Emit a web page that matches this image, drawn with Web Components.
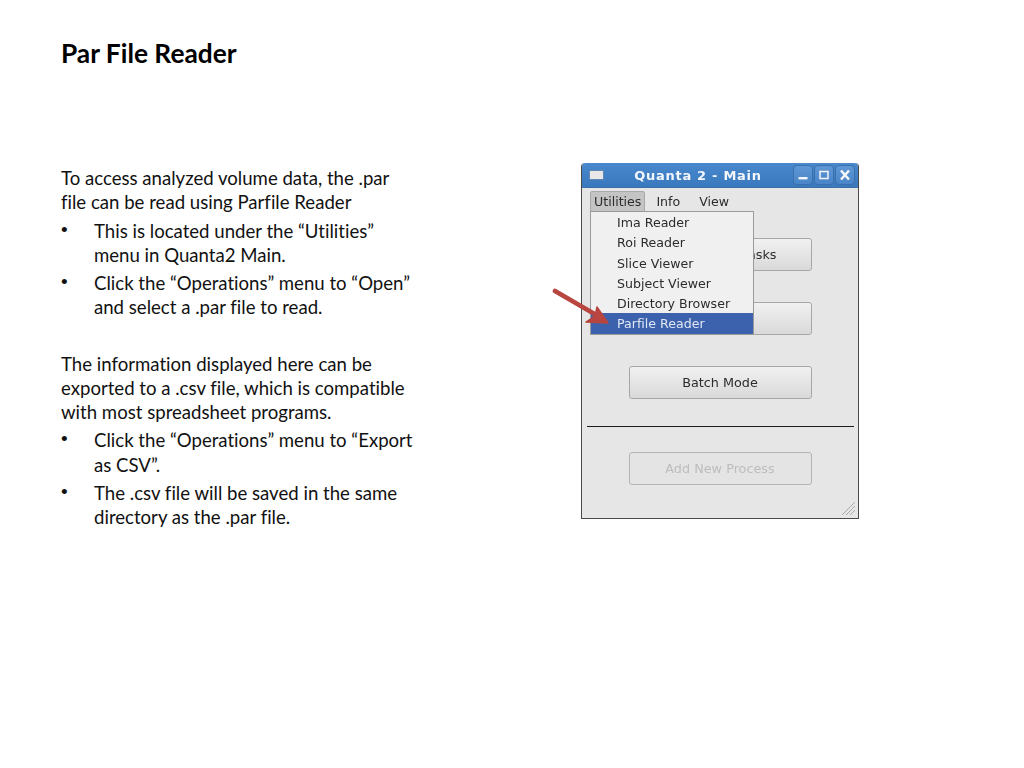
<!DOCTYPE html>
<html>
<head>
<meta charset="utf-8">
<title>Par File Reader</title>
<style>
  html, body { margin: 0; background: #fff; }
</style>
</head>
<body>
<slide-page>
  <span slot="title">Par File Reader</span>
  <slide-para>To access analyzed volume data, the .par file can be read using Parfile Reader</slide-para>
  <slide-bullet>This is located under the “Utilities” menu in Quanta2 Main.</slide-bullet>
  <slide-bullet>Click the “Operations” menu to “Open” and select a .par file to read.</slide-bullet>
  <slide-para class="next">The information displayed here can be exported to a .csv file, which is compatible with most spreadsheet programs.</slide-para>
  <slide-bullet>Click the “Operations” menu to “Export as CSV”.</slide-bullet>
  <slide-bullet>The .csv file will be saved in the same directory as the .par file.</slide-bullet>
  <quanta-window slot="figure">
    <quanta-menu slot="menu"></quanta-menu>
    <quanta-button class="end">Tasks</quanta-button>
    <quanta-button></quanta-button>
    <quanta-button>Batch Mode</quanta-button>
    <hr slot="rule">
    <quanta-button disabled slot="after">Add New Process</quanta-button>
  </quanta-window>
</slide-page>

<script>
class SlidePage extends HTMLElement {
  connectedCallback() {
    this.attachShadow({ mode: 'open' });
    this.shadowRoot.innerHTML = `
      <style>
        :host {
          display: block;
          width: 1024px;
          height: 768px;
          box-sizing: border-box;
          padding: 37px 0 0 61px;
          font-family: Lato, "Liberation Sans", sans-serif;
          font-variant-ligatures: none;
          color: #111;
          overflow: hidden;
        }
        h1 {
          margin: 0;
          font-size: 26.3px;
          line-height: 32px;
          font-weight: 700;
          color: #000;
        }
        .body {
          display: flex;
          margin-top: 94px;
        }
        .text {
          width: 355px;
          padding-top: 3px;
        }
        .figure {
          margin-left: 165px;
        }
      </style>
      <h1><slot name="title"></slot></h1>
      <div class="body">
        <div class="text"><slot></slot></div>
        <div class="figure"><slot name="figure"></slot></div>
      </div>
    `;
  }
}

class SlidePara extends HTMLElement {
  connectedCallback() {
    this.attachShadow({ mode: 'open' });
    this.shadowRoot.innerHTML = `
      <style>
        :host {
          display: block;
          font-size: 18.6px;
          line-height: 24.2px;
        }
        :host(.next) { margin-top: 32px; }
      </style>
      <slot></slot>
    `;
  }
}

class SlideBullet extends HTMLElement {
  connectedCallback() {
    this.attachShadow({ mode: 'open' });
    this.shadowRoot.innerHTML = `
      <style>
        :host {
          display: flex;
          font-size: 18.6px;
          line-height: 24.2px;
          margin-top: 4.2px;
        }
        .dot {
          flex: none;
          width: 33px;
          font-family: "Liberation Sans", sans-serif;
          font-size: 19px;
          line-height: 22px;
        }
      </style>
      <span class="dot">•</span>
      <span><slot></slot></span>
    `;
  }
}

class QuantaWindow extends HTMLElement {
  connectedCallback() {
    this.attachShadow({ mode: 'open' });
    this.shadowRoot.innerHTML = `
      <style>
        :host {
          display: block;
          position: relative;
          width: 278px;
          height: 356px;
          box-sizing: border-box;
          border: 1px solid #4a4a4a;
          border-top: 0;
          border-radius: 4px 4px 0 0;
          background: #e6e6e6;
          font-family: "DejaVu Sans", sans-serif;
          filter: blur(0.35px);
        }
        .title {
          display: flex;
          align-items: center;
          height: 25px;
          padding: 0 3px 0 7px;
          background: linear-gradient(#4a88cc, #3f7fc4 60%, #3a78bd);
          border-radius: 4px 4px 0 0;
          border-bottom: 1px solid #3c6ea8;
          box-sizing: border-box;
        }
        .app {
          width: 15px;
          height: 10px;
          background: #e8e8e8;
          border: 1px solid #5f86b4;
          box-sizing: border-box;
        }
        .name {
          flex: 1;
          text-align: center;
          color: #f2f6fb;
          font-size: 13px;
          font-weight: 700;
          letter-spacing: 0.7px;
          white-space: nowrap;
        }
        .ctl {
          width: 20px;
          height: 20px;
          margin-left: 1px;
          box-sizing: border-box;
          border: 1px solid #3a70ad;
          border-radius: 4px;
          background: linear-gradient(#5f96d4, #4a85c8);
          display: flex;
          align-items: center;
          justify-content: center;
        }
        .ctl svg { display: block; }
        .menubar {
          display: flex;
          height: 25px;
          padding: 3px 8px 0;
          box-sizing: border-box;
          font-size: 12.6px;
          color: #2c2c2c;
        }
        .menubar span {
          padding: 0 4px;
          line-height: 19px;
          height: 19px;
          border: 1px solid transparent;
          border-radius: 2px;
        }
        .menubar .open {
          background: #c4c4c4;
          border-color: #a8a8a8;
          padding: 0 3px;
          margin-right: 6px;
        }
        .menubar .info { margin-right: 9px; }
        .buttons {
          display: flex;
          flex-direction: column;
          align-items: center;
          gap: 31px;
          padding-top: 25px;
        }
        ::slotted(hr) {
          display: block;
          width: 267px;
          height: 1px;
          margin: 27px auto 25px;
          border: 0;
          background: #1c1c1c;
        }
        .after {
          display: flex;
          justify-content: center;
        }
        .grip {
          position: absolute;
          right: 2px;
          bottom: 2px;
        }
        .arrow {
          position: absolute;
          left: -30px;
          top: 125px;
          overflow: visible;
        }
      </style>
      <div class="title">
        <div class="app"></div>
        <div class="name">Quanta 2 - Main</div>
        <div class="ctl"><svg width="12" height="12" viewBox="0 0 12 12"><rect x="1.5" y="8" width="9" height="2.4" fill="#f2f6fb"/></svg></div>
        <div class="ctl"><svg width="12" height="12" viewBox="0 0 12 12"><rect x="2" y="2.5" width="8" height="7" fill="none" stroke="#f2f6fb" stroke-width="1.5"/></svg></div>
        <div class="ctl"><svg width="12" height="12" viewBox="0 0 12 12"><path d="M2 1.5L10 10.5M10 1.5L2 10.5" stroke="#f6f8fb" stroke-width="2.5" fill="none"/></svg></div>
      </div>
      <div class="menubar"><span class="open">Utilities</span><span class="info">Info</span><span>View</span></div>
      <div class="buttons"><slot></slot></div>
      <slot name="rule"></slot>
      <div class="after"><slot name="after"></slot></div>
      <slot name="menu"></slot>
      <svg class="grip" width="16" height="16" viewBox="0 0 16 16">
        <path d="M15 2L2 15M15 6L6 15M15 10L10 15" stroke="#a9a9a9" stroke-width="1" fill="none"/>
      </svg>
      <svg class="arrow" width="60" height="40" viewBox="0 0 60 40">
        <path d="M3 3L46 28" stroke="#b8453f" stroke-width="4.6" stroke-linecap="round" fill="none"/>
        <path d="M45 19L56 35L34 34L43 28Z" fill="#b8453f" stroke="#b8453f" stroke-width="1.5" stroke-linejoin="round"/>
      </svg>
    `;
  }
}

class QuantaButton extends HTMLElement {
  connectedCallback() {
    const off = this.hasAttribute('disabled');
    this.attachShadow({ mode: 'open' });
    this.shadowRoot.innerHTML = `
      <style>
        :host {
          display: flex;
          align-items: center;
          justify-content: center;
          width: 183px;
          height: 33px;
          box-sizing: border-box;
          border: 1px solid ${off ? '#b4b4b4' : '#a6a6a6'};
          border-radius: 3px;
          background: ${off ? '#e4e4e4' : 'linear-gradient(#f1f1f1, #d9d9d9)'};
          color: ${off ? '#bdbdbd' : '#2c2c2c'};
          font-size: 12.8px;
          white-space: nowrap;
        }
        :host(.end) {
          justify-content: flex-end;
          padding-right: 34px;
        }
      </style>
      <slot></slot>
    `;
  }
}

class QuantaMenu extends HTMLElement {
  connectedCallback() {
    const items = ['Ima Reader', 'Roi Reader', 'Slice Viewer', 'Subject Viewer', 'Directory Browser', 'Parfile Reader'];
    this.attachShadow({ mode: 'open' });
    this.shadowRoot.innerHTML = `
      <style>
        :host {
          display: block;
          position: absolute;
          left: 8px;
          top: 48px;
          width: 164px;
          box-sizing: border-box;
          border: 1px solid #9a9a9a;
          background: #f0f0f0;
          font-size: 12.6px;
          color: #2c2c2c;
        }
        div {
          height: 20.3px;
          line-height: 21px;
          padding-left: 26px;
          white-space: nowrap;
        }
        .sel {
          background: #3d62ad;
          color: #dfe6f5;
        }
      </style>
      ${items.map((t, i) => `<div class="${i === 5 ? 'sel' : ''}">${t}</div>`).join('')}
    `;
  }
}

customElements.define('slide-page', SlidePage);
customElements.define('slide-para', SlidePara);
customElements.define('slide-bullet', SlideBullet);
customElements.define('quanta-window', QuantaWindow);
customElements.define('quanta-button', QuantaButton);
customElements.define('quanta-menu', QuantaMenu);
</script>
</body>
</html>
